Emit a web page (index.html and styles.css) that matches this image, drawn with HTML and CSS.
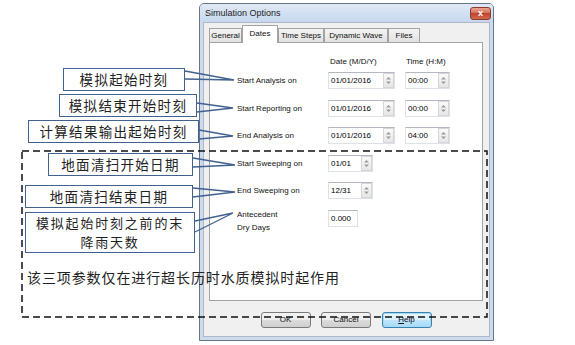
FILE: index.html
```html
<!DOCTYPE html>
<html lang="zh">
<head>
  <meta charset="utf-8">
  <title>Simulation Options – Dates</title>
  <link rel="stylesheet" href="styles.css">
</head>
<body>
  <div class="dialog">
    <div class="titlebar">
      <span>Simulation Options</span>
      <span class="close">x</span>
    </div>
    <div class="client">
      <div class="tabs">
        <div class="tab w-general">General</div>
        <div class="tab active w-dates">Dates</div>
        <div class="tab w-time">Time Steps</div>
        <div class="tab w-wave">Dynamic Wave</div>
        <div class="tab w-files">Files</div>
      </div>
      <div class="panel">
        <div class="grid head">
          <span></span><span class="h-date">Date (M/D/Y)</span><span class="h-time">Time (H:M)</span>
        </div>
        <div class="grid rows">
          <span class="lbl">Start Analysis on</span>
          <div class="field date"><span class="val">01/01/2016</span><span class="spin"><svg width="5" height="9" viewBox="0 0 5 9"><path d="M0 3.5 2.5 1 5 3.5zM0 5.5 2.5 8 5 5.5z" fill="#9a9a9a"/></svg></span></div>
          <div class="field time"><span class="val">00:00</span><span class="spin"><svg width="5" height="9" viewBox="0 0 5 9"><path d="M0 3.5 2.5 1 5 3.5zM0 5.5 2.5 8 5 5.5z" fill="#9a9a9a"/></svg></span></div>

          <span class="lbl">Start Reporting on</span>
          <div class="field date"><span class="val">01/01/2016</span><span class="spin"><svg width="5" height="9" viewBox="0 0 5 9"><path d="M0 3.5 2.5 1 5 3.5zM0 5.5 2.5 8 5 5.5z" fill="#9a9a9a"/></svg></span></div>
          <div class="field time"><span class="val">00:00</span><span class="spin"><svg width="5" height="9" viewBox="0 0 5 9"><path d="M0 3.5 2.5 1 5 3.5zM0 5.5 2.5 8 5 5.5z" fill="#9a9a9a"/></svg></span></div>

          <span class="lbl">End Analysis on</span>
          <div class="field date"><span class="val">01/01/2016</span><span class="spin"><svg width="5" height="9" viewBox="0 0 5 9"><path d="M0 3.5 2.5 1 5 3.5zM0 5.5 2.5 8 5 5.5z" fill="#9a9a9a"/></svg></span></div>
          <div class="field time"><span class="val">04:00</span><span class="spin"><svg width="5" height="9" viewBox="0 0 5 9"><path d="M0 3.5 2.5 1 5 3.5zM0 5.5 2.5 8 5 5.5z" fill="#9a9a9a"/></svg></span></div>

          <span class="lbl">Start Sweeping on</span>
          <div class="field short"><span class="val">01/01</span><span class="spin"><svg width="5" height="9" viewBox="0 0 5 9"><path d="M0 3.5 2.5 1 5 3.5zM0 5.5 2.5 8 5 5.5z" fill="#9a9a9a"/></svg></span></div>
          <span></span>

          <span class="lbl">End Sweeping on</span>
          <div class="field short"><span class="val">12/31</span><span class="spin"><svg width="5" height="9" viewBox="0 0 5 9"><path d="M0 3.5 2.5 1 5 3.5zM0 5.5 2.5 8 5 5.5z" fill="#9a9a9a"/></svg></span></div>
          <span></span>

          <span class="lbl two">Antecedent<br>Dry Days</span>
          <div class="field tiny"><span class="val">0.000</span></div>
          <span></span>
        </div>
      </div>
      <div class="buttons">
        <div class="btn">OK</div>
        <div class="btn">Cancel</div>
        <div class="btn focus"><u>H</u>elp</div>
      </div>
    </div>
  </div>

  <!-- annotations drawn over the screenshot -->
  <div class="notes">
    <svg class="marks" width="575" height="345" viewBox="0 0 575 345">
      <rect x="22" y="151" width="465" height="166" fill="none" stroke="#111" stroke-width="1.5" stroke-dasharray="7 4"/>
      <g fill="none" stroke="#41618f" stroke-width="1.3">
        <polyline points="185,71 234,80 185,79"/>
        <polyline points="197,103 233,108 197,112"/>
        <polyline points="199,130 233,136 199,139"/>
        <polyline points="193,158 235,165 193,167"/>
        <polyline points="193,188 235,192 193,197"/>
        <polyline points="195,221 233,213 195,232"/>
      </g>
    </svg>
    <div class="callout c1">模拟起始时刻</div>
    <div class="callout c2">模拟结束开始时刻</div>
    <div class="callout c3">计算结果输出起始时刻</div>
    <div class="callout c4">地面清扫开始日期</div>
    <div class="callout c5">地面清扫结束日期</div>
    <div class="callout c6">模拟起始时刻之前的末<br>降雨天数</div>
    <p class="remark">该三项参数仅在进行超长历时水质模拟时起作用</p>
  </div>
</body>
</html>
```

FILE: styles.css
```css
body{margin:0;width:575px;height:345px;overflow:hidden;position:relative;background:#fff;font-family:"Liberation Sans",Arial,sans-serif;color:#000}

/* dialog window */
.dialog{box-sizing:border-box;width:295px;height:338px;margin:3px 0 0 199px;border:1px solid #667589;border-radius:5px 5px 0 0;background:#cddbeb;display:flex;flex-direction:column}
.titlebar{height:18px;flex:none;display:flex;align-items:center;justify-content:space-between;padding:0 2px 0 5px;font-size:9px;color:#1b1b1b;background:linear-gradient(#dfe9f6,#c7d8ee);border-radius:4px 4px 0 0}
.close{width:21px;height:13px;box-sizing:border-box;border:1px solid #8c3a2c;border-radius:3px;background:linear-gradient(#e9a593,#d16b55 50%,#c2432c 50%,#cf6a52);color:#fff;font-size:9px;font-weight:bold;line-height:11px;text-align:center}
.client{flex:1;margin:0 3px 3px 3px;background:#f0f0f0;border:1px solid #aab8c9;padding:2px 6px 0 5px;display:flex;flex-direction:column}

/* tabs */
.tabs{display:flex;align-items:flex-end;height:17px;position:relative;z-index:1}
.tab{box-sizing:border-box;height:14px;border:1px solid #a3a3a3;border-bottom:none;background:linear-gradient(#f4f4f4,#e1e1e1);font-size:8px;line-height:13px;text-align:center;color:#111}
.tab.active{background:#fff;margin-bottom:-1px;height:18px;line-height:15px}
.w-general{width:33px}
.w-dates{width:36px}
.w-time{width:46px}
.w-wave{width:64px}
.w-files{width:32px}

.panel{box-sizing:border-box;height:259px;background:#fff;border:1px solid #a3a3a3;padding:13px 0 0 27px}
.grid{display:grid;grid-template-columns:81px 67px 45px;column-gap:10px;font-size:8px}
.head{height:12px;line-height:12px;color:#111}
.h-date{padding-left:2px}
.h-time{padding-left:1px}
.rows{margin-top:4px;grid-auto-rows:17px;row-gap:10.5px;align-items:center}
.lbl{color:#111;white-space:nowrap}
.lbl.two{align-self:start;line-height:13px;margin-top:-2px}

.field{box-sizing:border-box;height:17px;display:flex;align-items:center;background:#fff;border:1px solid #dde2e8;border-top-color:#b4b8c0}
.field .val{padding-left:2px;flex:1}
.field.short{width:45px}
.field.tiny{width:30px}
.spin{width:11px;height:15px;box-sizing:border-box;border:1px solid #d6d6d6;background:linear-gradient(#fafafa,#e6e6e6);display:flex;align-items:center;justify-content:center}

/* button row */
.buttons{display:flex;justify-content:center;gap:10.5px;margin-top:11px}
.btn{box-sizing:border-box;width:50px;height:16px;border:1px solid #7a7a7a;border-radius:3px;background:linear-gradient(#f3f3f3,#ebebeb 50%,#dcdcdc 50%,#cfcfcf);font-size:8px;line-height:14px;text-align:center;color:#111}
.btn.focus{border-color:#3c7fb1;box-shadow:inset 0 0 0 1px #9fdcf8;background:linear-gradient(#eaf6fd,#d9f0fc 50%,#bee6fd 50%,#a7d9f5)}

/* annotations */
.notes{position:absolute;inset:0;pointer-events:none;font-family:"Noto Sans CJK SC","Liberation Serif",sans-serif}
.marks{position:absolute;left:0;top:0}
.callout{position:absolute;box-sizing:border-box;height:23px;border:1.5px solid #41618f;background:#fff;font-size:13.5px;letter-spacing:1.3px;line-height:20px;text-align:center;color:#222}
.c1{left:63px;top:68px;width:122px}
.c2{left:59px;top:94px;width:138px}
.c3{left:28px;top:120px;width:171px}
.c4{left:48px;top:153px;width:145px}
.c5{left:25px;top:185px;width:168px}
.c6{left:25px;top:212px;width:170px;height:41px;font-size:13px;letter-spacing:1.8px;line-height:19px}
.remark{position:absolute;left:27px;top:268px;margin:0;font-size:14px;letter-spacing:0.9px;line-height:18px;color:#222}
```
